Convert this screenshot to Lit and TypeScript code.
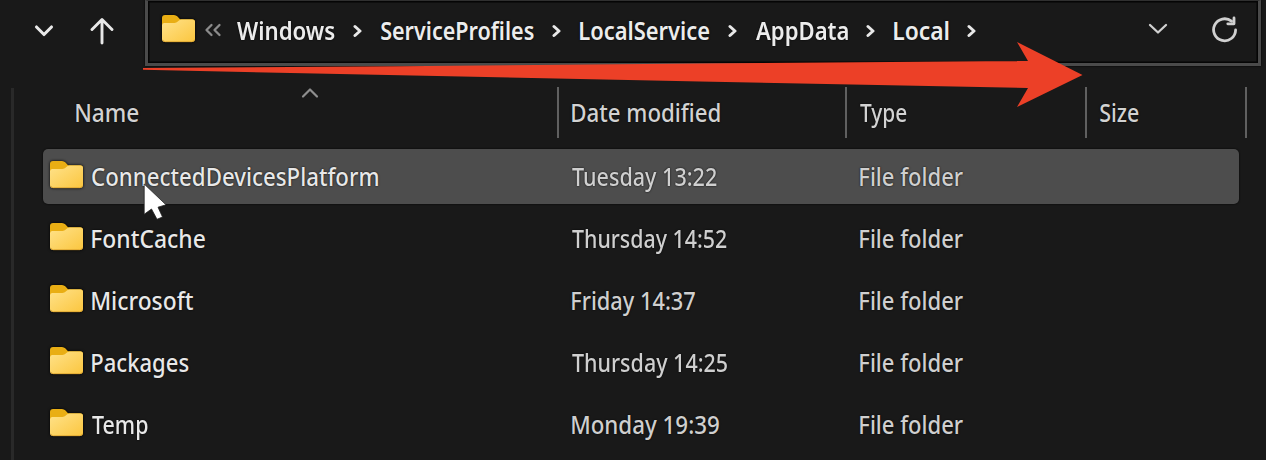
import { LitElement, html, css, svg } from "lit";
import { customElement, property, query } from "lit/decorators.js";

const FONT = '"Noto Sans", "Open Sans", sans-serif';

/** A single-line label whose glyphs span exactly `span` pixels. */
@customElement("fit-label")
class FitLabel extends LitElement {
  static styles = css`
    :host { display: block; flex: none; white-space: pre; line-height: 34px; }
    .text { display: inline-block; transform-origin: 0 50%; text-shadow: 0 0 2px #000; }
  `;
  @property() text = "";
  @property({ type: Number }) span = 100;
  @query(".text") label!: HTMLElement;

  render() {
    return html`<span class="text">${this.text}</span>`;
  }
  updated() {
    const cs = getComputedStyle(this);
    const ctx = document.createElement("canvas").getContext("2d")!;
    ctx.font = `${cs.fontWeight} ${cs.fontSize} ${FONT}`;
    const m = ctx.measureText(this.text);
    const k = this.span / (m.actualBoundingBoxLeft + m.actualBoundingBoxRight);
    this.style.width = `${this.span}px`;
    this.label.style.transform = `translateX(${m.actualBoundingBoxLeft * k}px) scaleX(${k})`;
  }
}

const folder = html`<svg class="folder" width="35" height="29" viewBox="0 0 35 29">
  <defs>
    <linearGradient id="f" x1="0" y1="0" x2="1" y2="1">
      <stop offset="0" stop-color="#ffe28a" /><stop offset="1" stop-color="#fbc63f" />
    </linearGradient>
  </defs>
  <path d="M1 4Q1 1 4 1H13Q15 1 16.5 2.6L19 5.3H31Q34 5.3 34 8.3V14H1Z" fill="#e9ae14" />
  <path d="M1 11.5Q1 9 3 9H13.5Q15.5 9 16.8 7.6L18 6.4Q19 5.4 20.5 5.4H31.5Q34 5.4 34 8V25Q34 28 31 28H4Q1 28 1 25Z" fill="url(#f)" />
  <path d="M1.8 26Q2.5 27.7 4.5 27.7H30.5Q32.8 27.7 33.4 26" fill="none" stroke="#d9a02c" stroke-width=".8" />
</svg>`;

const crumbs: [string, number][] = [
  ["Windows", 98], ["ServiceProfiles", 153], ["LocalService", 129.5], ["AppData", 92], ["Local", 55],
];

const rows: [string, number, string, number][] = [
  ["ConnectedDevicesPlatform", 286, "Tuesday 13:22", 145],
  ["FontCache", 113.5, "Thursday 14:52", 155],
  ["Microsoft", 101, "Friday 14:37", 123.5],
  ["Packages", 97, "Thursday 14:25", 155],
  ["Temp", 56, "Monday 19:39", 147.5],
];

@customElement("app-root")
class AppRoot extends LitElement {
  static styles = css`
    :host {
      display: block; position: relative; box-sizing: border-box; width: 1266px; height: 460px;
      overflow: hidden; background: #191919; color: #e6e6e6; font: 500 25px "Noto Sans", "Open Sans", sans-serif;
    }
    svg { display: block; flex: none; }
    .folder { filter: drop-shadow(0 0 1.5px #000); }
    .bar { display: flex; height: 66px; }
    .nav { display: flex; align-items: center; width: 145px; box-sizing: border-box; padding: 0 0 4px 33px; gap: 35px; }
    .address {
      display: flex; align-items: center; box-sizing: border-box; width: 1116px; height: 66px; padding: 0 20px 5px 13px;
      border: 3px solid #4a4a4a; border-top: 1px solid #303030; box-shadow: inset 0 0 0 1.5px #050505, 0 0 2px #000;
      color: #ececec; font-weight: 600;
    }
    .address .folder { margin-bottom: 2px; }
    .more { margin: 0 15px 0 8px; }
    .sep { margin: 2px 19px 0 18px; }
    .grow { flex: 1; }
    .drop { margin-bottom: 2px; }
    .reload { margin: 0 0 2px 42px; }
    .body { display: flex; height: 394px; }
    .rail { width: 3px; margin: 22px 29px 0 11px; background: #292929; }
    .list { width: 1223px; padding-top: 21px; }
    .head, .row { display: grid; }
    .head { height: 51px; color: #d2d2d2; grid-template-columns: 515.5px 288px 240px 160px; }
    .cell {
      position: relative; display: flex; align-items: center; box-sizing: border-box;
      padding: 0 0 1px 13.5px; border-right: 2.5px solid #606060;
    }
    .cell.first { padding-left: 33px; }
    .sort { position: absolute; left: 257px; top: -0.5px; }
    .rows { padding-top: 11px; }
    .row {
      height: 55px; margin: 0 0 7px; width: 1196px; border-radius: 5px; align-items: center; color: #cfcfcf;
      grid-template-columns: 529px 288px 1fr;
    }
    .row.on { background: #4d4d4d; box-shadow: 0 0 2px #000; }
    .row > fit-label, .name fit-label { margin-bottom: 1px; }
    .name { display: flex; align-items: center; gap: 8px; padding-left: 6px; color: #e8e8e8; }
    .name .folder { margin-bottom: 5px; }
    .overlay { position: absolute; left: 0; top: 0; pointer-events: none; }
  `;

  render() {
    const line = (d: string, w: number, c = "#e8e8e8") =>
      svg`<path d=${d} fill="none" stroke=${c} stroke-width=${w} stroke-linecap="round" stroke-linejoin="round" />`;
    return html`
      <div class="bar">
        <div class="nav">
          <svg width="22" height="14">${line("M3.5 3L11 10.5L18.5 3", 3.1)}</svg>
          <svg width="24" height="28">${line("M12 26V3M2 12.5L12 2.5L22 12.5", 2.9)}</svg>
        </div>
        <div class="address">
          ${folder}
          <svg class="more" width="18" height="14">${line("M7.5 2L2.5 7L7.5 12M15.5 2L10.5 7L15.5 12", 2.3, "#8c8c8c")}</svg>
          ${crumbs.map(([t, w]) => html`
            <fit-label .text=${t} .span=${w}></fit-label>
            <svg class="sep" width="9" height="14">${line("M2 2.5L7 7L2 11.5", 3)}</svg>`)}
          <span class="grow"></span>
          <svg class="drop" width="20" height="12">${line("M2 2L10 9.5L18 2", 2.3, "#d0d0d0")}</svg>
          <svg class="reload" width="28" height="28">
            ${line("M21.5 6.2A11 11 0 1 0 25.6 15", 2.8, "#d0d0d0")}
            ${line("M24 3V8.8H17.8", 2.8, "#d0d0d0")}
          </svg>
        </div>
      </div>
      <div class="body">
        <div class="rail"></div>
        <div class="list">
          <div class="head">
            <div class="cell first">
              <fit-label .text=${"Name"} .span=${63}></fit-label>
              <svg class="sort" width="20" height="12">${line("M3 9.5L10 2.5L17 9.5", 2.2, "#8e8e8e")}</svg>
            </div>
            <div class="cell"><fit-label .text=${"Date modified"} .span=${148}></fit-label></div>
            <div class="cell"><fit-label .text=${"Type"} .span=${47}></fit-label></div>
            <div class="cell"><fit-label .text=${"Size"} .span=${39}></fit-label></div>
          </div>
          <div class="rows">
            ${rows.map(([n, w, d, dw], i) => html`
              <div class="row ${i === 0 ? "on" : ""}">
                <div class="name">${folder}<fit-label .text=${n} .span=${w}></fit-label></div>
                <fit-label .text=${d} .span=${dw}></fit-label>
                <fit-label .text=${"File folder"} .span=${103.5}></fit-label>
              </div>`)}
          </div>
        </div>
      </div>
      <svg class="overlay" width="1266" height="460">
        <path d="M143 68L400 66.3L700 63.5L1028 61L1017 42L1082.5 75L1017 107L1028 88L700 81.5L143 69.8Z" fill="#ec4027" />
        <path d="M144.2 184V214.3L151.5 209L157 219.3L162.5 217L158 207.2L166 204.8Z" fill="#fff" stroke="#222" stroke-width=".8" />
      </svg>
    `;
  }
}
